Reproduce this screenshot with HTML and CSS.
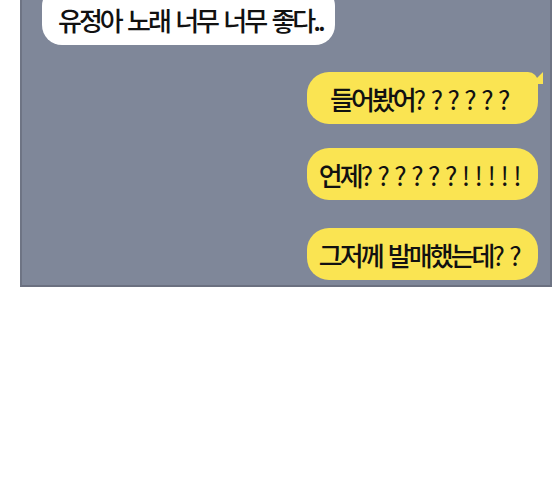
FILE: index.html
```html
<!DOCTYPE html>
<html lang="ko">
  <head>
    <meta charset="utf-8">
    <title>Chat</title>
    <link rel="stylesheet" href="styles.css">
  </head>

  <body>
    <div class="panel">
      <div class="bubble white">유정아 노래 너무 너무 좋다..</div>
      <div class="bubble yellow tail">들어봤어<span class="marks">??????</span></div>
      <div class="bubble yellow second">언제<span class="marks">??????!!!!!</span></div>
      <div class="bubble yellow third">그저께 발매했는데<span class="marks">??</span></div>
    </div>
  </body>
</html>
```

FILE: styles.css
```css
body {
  margin: 0;
  background-color: #ffffff;
  font-family: "Noto Sans CJK KR", "Noto Sans", sans-serif;
  overflow: hidden;
}

.panel {
  margin-left: 20px;
  width: 516px;
  height: 285px;
  background-color: #7f8799;
  border-left: 2px solid #6e7484;
  border-right: 2px solid #6e7484;
  border-bottom: 2px solid #6b7080;
  display: flex;
  flex-direction: column;
  padding: 0 12px 0 0;
  overflow: hidden;
}

.bubble {
  font-size: 26px;
  font-weight: 500;
  letter-spacing: -3px;
  word-spacing: 2px;
  color: #111111;
  display: flex;
  align-items: center;
  justify-content: center;
  white-space: nowrap;
}

.marks {
  font-weight: 400;
  letter-spacing: 4.5px;
}

.white {
  align-self: flex-start;
  margin-left: 20px;
  margin-top: -14px;
  height: 59px;
  padding: 8px 12px 0 16px;
  box-sizing: border-box;
  background-color: #ffffff;
  border-radius: 20px;
}

.yellow {
  align-self: flex-end;
  width: 231px;
  height: 52px;
  background-color: #fae452;
  border-radius: 22px;
  position: relative;
}

.tail {
  margin-top: 27px;
  border-top-right-radius: 10px;
}

.tail::after {
  content: "";
  position: absolute;
  right: -5px;
  top: 0;
  width: 0;
  height: 0;
  border-left: 12px solid transparent;
  border-top: 12px solid #fae452;
  transform: rotate(180deg) scaleX(-1);
}

.second {
  margin-top: 24px;
}

.third {
  margin-top: 28px;
}
```
